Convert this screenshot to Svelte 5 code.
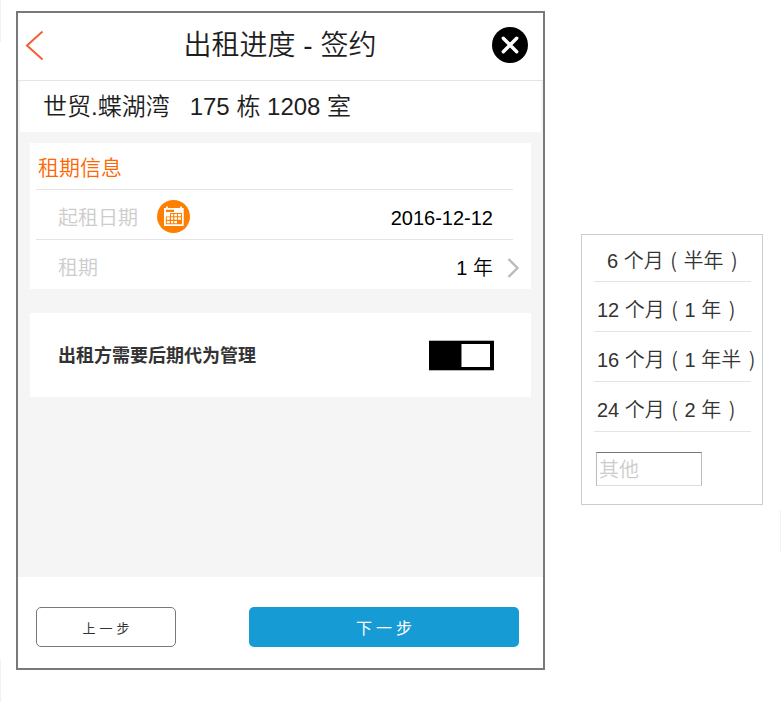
<script>
  const options = [
    { term: '6 个月', detail: '半年', indent: 13 },
    { term: '12 个月', detail: '1 年', indent: 3 },
    { term: '16 个月', detail: '1 年半', indent: 3 },
    { term: '24 个月', detail: '2 年', indent: 3 }
  ];
  let managed = $state(true);
  let other = $state('');
</script>

<div class="page">
  <i class="edge e1"></i><i class="edge e2"></i><i class="edge e3"></i>
  <main class="phone">
    <header>
      <button class="back" aria-label="返回">
        <svg width="20" height="32" viewBox="0 0 20 32" fill="none" stroke="#f4602f" stroke-width="2"><path d="M17.5 1.5 2 15.5 17.5 29.5" /></svg>
      </button>
      <h1>出租进度 - 签约</h1>
      <button class="close" aria-label="关闭">
        <svg width="36" height="36" viewBox="0 0 36 36"><circle cx="18" cy="18" r="18" /><path d="M11.3 11.3 24.7 24.7M24.7 11.3 11.3 24.7" stroke="#fff" stroke-width="3.4" stroke-linecap="round" /></svg>
      </button>
    </header>
    <div class="address"><span>世贸.蝶湖湾</span><span>175 栋 1208 室</span></div>

    <div class="content">
      <section class="card lease">
        <h2>租期信息</h2>
        <div class="row">
          <span class="label">起租日期</span>
          <svg class="cal" width="33" height="33" viewBox="0 0 33 33">
            <circle cx="16.5" cy="16.5" r="16.500" fill="#ff8000" />
            <path d="M7 8h2V6.500h2V8h12V6.500h2V8h1.700v18H7z" fill="#fff" />
            <path d="M9 9.700h8V12H9zM13 13h12v11.300H8.800V16.500H13z" fill="#ff8000" />
            <path d="M14 14h2.200v2.200H14zM17.300 14h2.700v2.200h-2.700zM21 14h3v2.200h-3zM9.800 17.300h3v2.500h-3zM14 17.300h2.200v2.500H14zM17.300 17.300h2.700v2.500h-2.700zM21 17.300h3v2.500h-3zM9.800 21h3v2.300h-3zM14 21h2.200v2.300H14zM17.300 21h2.700v2.300h-2.700z" fill="#fff" />
          </svg>
          <span class="value">2016-12-12</span>
        </div>
        <div class="row last">
          <span class="label">租期</span>
          <span class="value">1 年</span>
          <svg class="chev" width="13" height="22" viewBox="0 0 13 22" fill="none" stroke="#bbb" stroke-width="2.400"><path d="M1.500 2 10.500 11 1.500 20" /></svg>
        </div>
      </section>
      <section class="card manage">
        <span>出租方需要后期代为管理</span>
        <button class="toggle" class:off={!managed} aria-label="代为管理" onclick={() => (managed = !managed)}><i></i></button>
      </section>
    </div>

    <footer>
      <button class="prev">上一步</button>
      <button class="next">下一步</button>
    </footer>
  </main>

  <aside>
    {#each options as o}
      <div class="option" style="padding-left: {o.indent}px">{o.term} <span class="paren open">(</span> {o.detail} <span class="paren">)</span></div>
    {/each}
    <input placeholder="其他" bind:value={other} />
  </aside>
</div>

<style>
  .page {
    position: relative;
    box-sizing: border-box;
    width: 781px;
    height: 702px;
    padding: 11px 0 0 16px;
    display: flex;
    align-items: flex-start;
    overflow: hidden;
    background: #fff;
    font-family: "Liberation Sans", "Noto Sans CJK SC", sans-serif;
    font-weight: 350;
    color: #1e1e1e;
  }
  .page * { box-sizing: border-box; }
  .edge { position: absolute; width: 1px; background: #f2f2f2; }
  .e1 { left: 0; top: 0; height: 42px; }
  .e2 { left: 0; top: 660px; height: 42px; }
  .e3 { right: 0; top: 510px; height: 42px; }
  button { padding: 0; border: 0; background: none; font: inherit; }
  svg { display: block; }
  .phone {
    width: 529px;
    height: 659px;
    border: 2px solid #797979;
    display: flex;
    flex-direction: column;
    background: #f5f5f5;
  }
  header {
    height: 68px;
    border-bottom: 1px solid #e4e4e4;
    background: #fff;
    display: flex;
    align-items: center;
    justify-content: space-between;
    padding: 0 15px 4px 7px;
  }
  .back { width: 36px; padding-top: 3px; }
  h1 { margin: 0; padding: 3px 0 0 7px; font-size: 28px; line-height: 40px; font-weight: 350; white-space: pre; }
  .address {
    height: 51px;
    margin: 0 2px;
    padding-left: 23px;
    display: flex;
    gap: 20px;
    background: #fff;
    font-size: 24px;
    line-height: 51px;
    white-space: pre;
  }
  .content { flex: 1; padding: 11px 12px 0; }
  .card { background: #fff; }
  .lease { height: 146px; padding: 0 18px 0 6px; }
  h2 {
    margin: 0;
    height: 47px;
    padding-left: 2px;
    border-bottom: 1px solid #e4e4e4;
    color: #ff6600;
    font-size: 21px;
    line-height: 49px;
    font-weight: 350;
  }
  .row {
    height: 50px;
    padding: 0 20px 0 22px;
    border-bottom: 1px solid #e4e4e4;
    display: flex;
    align-items: center;
    font-size: 20px;
    line-height: 28px;
  }
  .row.last { border: 0; padding-top: 6px; padding-right: 0; }
  .label { color: #ccc; }
  .cal { margin: 4px 0 0 19px; }
  .value { margin-left: auto; color: #000; padding-top: 6px; }
  .row .label { padding-top: 7px; }
  .row.last .value, .row.last .label { padding-top: 0; }
  .chev { margin: 0 -7px 0 14px; }
  .manage {
    height: 84px;
    margin-top: 24px;
    padding: 0 37px 0 28px;
    display: flex;
    align-items: center;
    justify-content: space-between;
    color: #333;
    font-size: 18px;
    font-weight: 700;
  }
  .manage span { padding-bottom: 2px; }
  .toggle {
    width: 65px;
    height: 31px;
    padding: 3px 4px;
    display: flex;
    justify-content: flex-end;
    background: #000;
    border: solid #b5b5b5;
    border-width: 1px 0;
  }
  .toggle.off { justify-content: flex-start; }
  .toggle i { width: 29px; height: 23px; background: #fff; border-left: 1px solid #888; }
  footer {
    height: 91px;
    padding: 9px 24px 0 18px;
    display: flex;
    align-items: center;
    justify-content: space-between;
    background: #fff;
  }
  .prev, .next { height: 40px; border-radius: 5px; display: flex; align-items: center; justify-content: center; }
  .prev { width: 140px; padding-left: 4px; border: 1px solid #797979; color: #333; font-size: 13px; letter-spacing: 4px; font-weight: 400; }
  .next { width: 270px; padding-left: 4px; background: #169bd5; color: #fff; font-size: 16px; letter-spacing: 4px; font-weight: 400; }
  aside {
    width: 182px;
    height: 271px;
    margin: 223px 0 0 36px;
    padding: 0 11px 0 12px;
    border: 1px solid #ccc;
    color: #333;
    font-size: 20px;
  }
  .option { height: 50px; border-bottom: 1px solid #e4e4e4; line-height: 56px; white-space: pre; }
  .option:first-child { height: 47px; line-height: 53px; }
  .paren { font-family: "Noto Sans CJK SC", sans-serif; line-height: 1; margin-left: 2px; }
  .paren.open { margin-left: 1px; margin-right: 1px; }
  input {
    display: block;
    width: 106px;
    height: 34px;
    margin: 20px 0 0 2px;
    padding: 2px 2px 0;
    border: 1px solid #bbb;
    border-top: 1px solid #777;
    border-bottom-color: #ddd;
    background: #fff;
    font: inherit;
    outline: 0;
  }
  input::placeholder { color: #ccc; opacity: 1; }
</style>
